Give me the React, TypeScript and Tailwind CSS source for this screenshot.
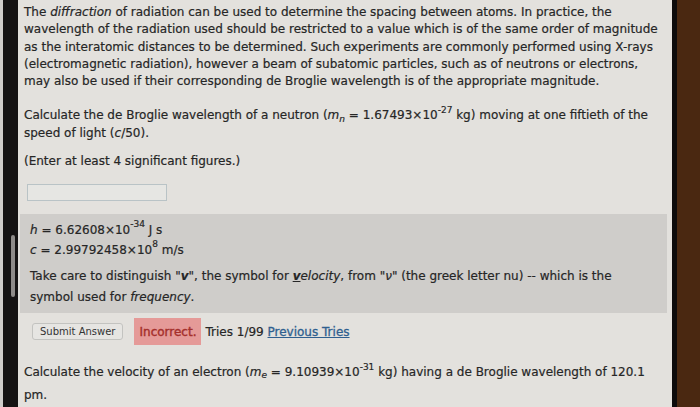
import React from 'react';

function Sup({ children }: { children: React.ReactNode }) {
  return <sup className="top-[-0.7em] text-[9px] leading-none">{children}</sup>;
}

export default function App() {
  return (
    <div
      className="flex h-[407px] w-[700px] overflow-hidden bg-[#d9d7d4] text-[12px] text-[#262626] [-webkit-text-stroke:0.2px_#262626]"
      style={{ fontFamily: '"DejaVu Sans", Verdana, sans-serif' }}
    >
      {/* left edge + scroll bar */}
      <div className="w-[3px] bg-[#cfcdca]" />
      <div className="relative w-[15px] bg-[#151313]">
        <div className="absolute left-[8px] top-[235px] h-[62px] w-[4px] rounded-full bg-[#8e8b89]" />
      </div>

      {/* page */}
      <div className="flex w-[654px] flex-col bg-[#e3e1dd] pt-[4px]">
        <div className="whitespace-nowrap pl-[6px] leading-[17.3px]">
          The <i>diffraction</i> of radiation can be used to determine the spacing between atoms. In practice, the
          <br />
          wavelength of the radiation used should be restricted to a value which is of the same order of magnitude
          <br />
          as the interatomic distances to be determined. Such experiments are commonly performed using X-rays
          <br />
          (electromagnetic radiation), however a beam of subatomic particles, such as of neutrons or electrons,
          <br />
          may also be used if their corresponding de Broglie wavelength is of the appropriate magnitude.
        </div>

        <div className="mt-[17px] whitespace-nowrap pl-[6px] leading-[17.3px]">
          Calculate the de Broglie wavelength of a neutron (<i>m</i>
          <sub className="text-[9px]"><i>n</i></sub> = 1.67493×10<Sup>-27</Sup> kg) moving at one fiftieth of the
          <br />
          speed of light (<i>c</i>/50).
        </div>

        <div className="mt-[11px] pl-[6px] leading-[17px]">(Enter at least 4 significant figures.)</div>

        <div className="ml-[9px] mt-[14px] h-[17px] w-[140px] border border-[#b9c3c6] bg-[#e6e6e3]" />

        <div className="ml-[2px] mt-[13px] h-[102px] w-[647px] bg-[#cfcdca] pl-[10px] pt-[6px]">
          <div className="leading-[20px]">
            <i>h</i> = 6.62608×10<Sup>-34</Sup> J s
          </div>
          <div className="leading-[20px]">
            <i>c</i> = 2.99792458×10<Sup>8</Sup> m/s
          </div>
          <div className="mt-[6px] whitespace-nowrap leading-[21px]">
            Take care to distinguish "<b><i>v</i></b>", the symbol for <b className="underline"><i>v</i></b>
            <i>elocity</i>, from "<i>ν</i>" (the greek letter nu) -- which is the
            <br />
            symbol used for <i>frequency</i>.
          </div>
        </div>

        <div className="ml-[14px] mt-[5px] flex items-center gap-[11px]">
          <button className="h-[17px] rounded-[3px] border border-[#c3c3c0] bg-[#e6e5e2] px-[7px] text-[10px] leading-none text-[#333] [-webkit-text-stroke:0px]">
            Submit Answer
          </button>
          <div className="flex items-center">
            <span className="flex h-[27px] items-center bg-[#e59a98] px-[5px] text-[#a5302c] [-webkit-text-stroke:0.4px_#a5302c]">
              Incorrect.
            </span>
            <span className="ml-[4px]">
              Tries 1/99 <span className="text-[#2f5f8f] underline [-webkit-text-stroke:0.3px_#2f5f8f]">Previous Tries</span>
            </span>
          </div>
        </div>

        <div className="mt-[16px] whitespace-nowrap pl-[6px] leading-[23px]">
          Calculate the velocity of an electron (<i>m</i>
          <sub className="text-[9px]"><i>e</i></sub> = 9.10939×10<Sup>-31</Sup> kg) having a de Broglie wavelength of 120.1
          <br />
          pm.
        </div>
      </div>

      {/* monitor bezel */}
      <div className="w-[5px] bg-[#0d0b0c]" />
      <div className="flex-1 bg-[#4a2811]" />
    </div>
  );
}
